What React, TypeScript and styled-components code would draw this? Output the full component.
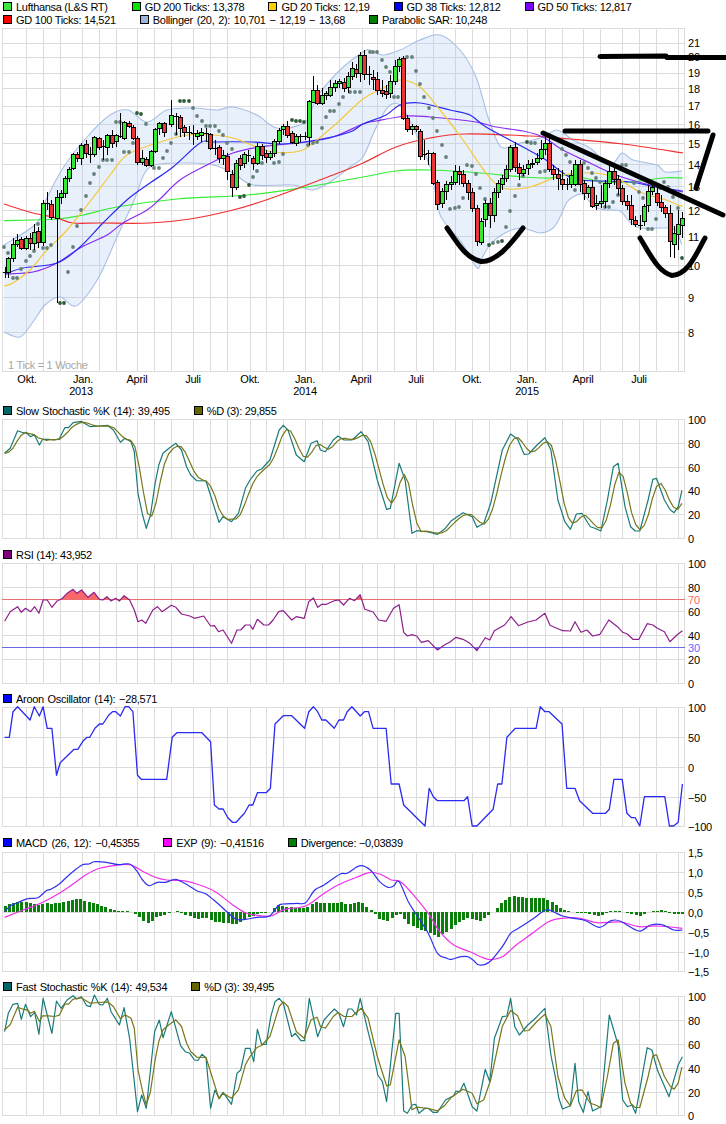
import * as React from 'react';
import styled, { createGlobalStyle } from 'styled-components';

const FONT = '"Liberation Sans", Arial, sans-serif';

const GlobalStyle = createGlobalStyle`
  html, body {
    margin: 0;
    padding: 0;
    background: #ffffff;
  }
`;

const Page = styled.div`
  width: 726px;
  height: 1124px;
  overflow: hidden;
  background: #ffffff;
  font-family: ${FONT};
`;

const Legend = styled.div<{ $height: number }>`
  display: flex;
  flex-direction: column;
  height: ${(p) => p.$height}px;
`;

const LegendRow = styled.div<{ $height: number }>`
  display: flex;
  align-items: center;
  gap: 24px;
  height: ${(p) => p.$height}px;
  padding-left: 3px;
`;

const LegendItem = styled.div<{ $spread: number }>`
  display: flex;
  align-items: center;
  gap: 4px;
  font-size: 11px;
  letter-spacing: -0.3px;
  word-spacing: ${(p) => p.$spread}px;
  color: #000000;
  white-space: nowrap;
`;

const Swatch = styled.span<{ $color: string }>`
  display: block;
  width: 7px;
  height: 7px;
  border: 1px solid #000000;
  background: ${(p) => p.$color};
`;

const Chart = styled.svg`
  display: block;
  overflow: visible;
`;

const GridLine = styled.line`
  stroke: #dcdcdc;
  stroke-width: 1;
  shape-rendering: crispEdges;
`;

const LevelLine = styled.line<{ $color: string }>`
  stroke: ${(p) => p.$color};
  stroke-width: 1;
  shape-rendering: crispEdges;
`;

const AxisLabel = styled.text<{ $color?: string }>`
  font-family: ${FONT};
  font-size: 11px;
  letter-spacing: -0.2px;
  fill: ${(p) => p.$color || '#000000'};
  dominant-baseline: central;
`;

const TimeLabel = styled.text`
  font-family: ${FONT};
  font-size: 11px;
  letter-spacing: -0.2px;
  fill: #000000;
  text-anchor: middle;
  dominant-baseline: central;
`;

const TickNote = styled.text`
  font-family: ${FONT};
  font-size: 11px;
  letter-spacing: -0.3px;
  fill: #a8a8a8;
  dominant-baseline: central;
`;

const Curve = styled.path<{ $color: string; $width?: number }>`
  fill: none;
  stroke: ${(p) => p.$color};
  stroke-width: ${(p) => p.$width || 1.2}px;
  stroke-linejoin: round;
`;

const Band = styled.path`
  fill: rgba(170, 200, 240, 0.28);
  stroke: none;
`;

const Wick = styled.line`
  stroke: #000000;
  stroke-width: 1;
  shape-rendering: crispEdges;
`;

const Body = styled.rect<{ $up: boolean }>`
  fill: ${(p) => (p.$up ? '#35e835' : '#ee3535')};
  stroke: #000000;
  stroke-width: 1;
  shape-rendering: crispEdges;
`;

const SarDot = styled.circle<{ $dark: boolean }>`
  fill: ${(p) => (p.$dark ? '#2f5a3a' : '#66807a')};
`;

const Sketch = styled.path`
  fill: none;
  stroke: #000000;
  stroke-width: 5px;
  stroke-linecap: round;
  stroke-linejoin: round;
`;

const Histogram = styled.rect`
  fill: #0a800a;
  shape-rendering: crispEdges;
`;

const OverFill = styled.path<{ $color: string }>`
  fill: ${(p) => p.$color};
  stroke: none;
`;

type Point = number[];

const parse = (s: string): Point[] =>
  s
    .trim()
    .split(/\s+/)
    .map((p) => p.split(',').map(Number));

// reads the traced values of the lower panels, which were taken at 2.16x / 3x
const traced = (s: string, base: number): Point[] =>
  parse(s).map(([x, y]) => [x / 2.16, base + y / 3]);

const straight = (pts: Point[]) => 'M' + pts.map((p) => `${p[0].toFixed(1)} ${p[1].toFixed(1)}`).join('L');

const smooth = (pts: Point[]) => {
  let d = `M${pts[0][0]} ${pts[0][1]}`;
  for (let i = 0; i < pts.length - 1; i++) {
    const a = pts[i - 1] || pts[i];
    const b = pts[i];
    const c = pts[i + 1];
    const e = pts[i + 2] || c;
    const c1x = b[0] + (c[0] - a[0]) / 6;
    const c1y = b[1] + (c[1] - a[1]) / 6;
    const c2x = c[0] - (e[0] - b[0]) / 6;
    const c2y = c[1] - (e[1] - b[1]) / 6;
    d += `C${c1x.toFixed(1)} ${c1y.toFixed(1)} ${c2x.toFixed(1)} ${c2y.toFixed(1)} ${c[0].toFixed(1)} ${c[1].toFixed(1)}`;
  }
  return d;
};

const valueAt = (pts: Point[], x: number) => {
  if (x <= pts[0][0]) return pts[0][1];
  for (let i = 1; i < pts.length; i++) {
    if (x <= pts[i][0]) {
      const t = (x - pts[i - 1][0]) / (pts[i][0] - pts[i - 1][0]);
      return pts[i - 1][1] + t * (pts[i][1] - pts[i - 1][1]);
    }
  }
  return pts[pts.length - 1][1];
};

const WEEKS = Array.from({ length: 162 }, (_, i) => 4.5 + i * 4.208);

const average3 = (pts: Point[]): Point[] =>
  WEEKS.map((x, i) => {
    const a = valueAt(pts, WEEKS[Math.max(i - 2, 0)]);
    const b = valueAt(pts, WEEKS[Math.max(i - 1, 0)]);
    const c = valueAt(pts, x);
    return [x, (a + b + c) / 3];
  });

const GRID_X = [
  2, 26, 43, 60, 82, 99, 116, 137, 154, 171, 193, 210, 227, 250, 266, 283, 305, 322, 339, 362, 377, 394, 416, 433,
  455, 472, 489, 510, 527, 545, 562, 583, 600, 622, 639, 656, 678, 684,
];

const TIME_LABELS: [string, number][] = [
  ['Okt.', 27],
  ['Jan.', 83],
  ['April', 137],
  ['Juli', 193],
  ['Okt.', 250],
  ['Jan.', 305],
  ['April', 361],
  ['Juli', 416],
  ['Okt.', 472],
  ['Jan.', 527],
  ['April', 583],
  ['Juli', 639],
];

const YEAR_LABELS: [string, number][] = [
  ['2013', 81],
  ['2014', 305],
  ['2015', 527],
];

const PRICE_GRID = [28, 43, 57, 73, 88, 106, 124, 143, 164, 186, 210, 236, 265, 297, 332, 371];

const PRICE_LABELS: [string, number][] = [
  ['21', 43],
  ['20', 57],
  ['19', 73],
  ['18', 89],
  ['17', 106],
  ['16', 125],
  ['15', 144],
  ['14', 165],
  ['13', 187],
  ['12', 211],
  ['11', 237],
  ['10', 266],
  ['9', 298],
  ['8', 333],
];

// x, body top, body bottom, wick top, wick bottom, 1 = rising week
const CANDLES: number[][] = [
  [4.5, 272, 272, 267, 278, 1], [8, 258, 272, 257, 278, 1], [13, 244, 258, 238, 262, 1], [17, 240, 244, 234, 247, 1],
  [21, 239, 248, 237, 250, 0], [26, 238, 248, 236, 250, 1], [30, 238, 243, 233, 250, 0], [34, 232, 243, 224, 250, 1],
  [38, 231, 242, 227, 248, 0], [43, 203, 242, 200, 246, 1], [47, 203, 203, 192, 210, 0], [51, 204, 217, 200, 220, 0],
  [56.5, 197, 218, 190, 303, 1], [60.5, 193, 197, 190, 204, 1], [64.5, 178, 193, 176, 198, 1], [68.5, 169, 178, 167, 182, 1],
  [73, 154, 168, 153, 170, 1], [77, 154, 158, 152, 162, 0], [81, 145, 158, 143, 165, 1], [86, 144, 153, 140, 158, 0],
  [90, 154, 154, 147, 163, 0], [94, 137, 154, 136, 157, 1], [99, 138, 147, 137, 150, 0], [103, 146, 146, 140, 160, 0],
  [107, 135, 147, 134, 155, 1], [112, 135, 143, 130, 148, 0], [116, 135, 141, 134, 147, 1], [120, 136, 136, 113, 138, 0],
  [124, 122, 138, 121, 140, 1], [129, 123, 126, 121, 128, 0], [133, 127, 138, 125, 140, 0], [137, 138, 162, 136, 165, 0],
  [142, 158, 162, 150, 165, 1], [146, 159, 165, 157, 167, 0], [151, 151, 165, 150, 167, 1], [154.5, 129, 151, 128, 153, 1],
  [159, 123, 128, 122, 135, 1], [164, 123, 132, 122, 137, 0], [171, 115, 124, 100, 127, 1], [176, 116, 116, 113, 135, 0],
  [180, 117, 128, 115, 137, 0], [184, 127, 132, 125, 137, 0], [189, 132, 132, 126, 140, 0], [193, 133, 133, 125, 145, 0],
  [197, 133, 136, 130, 140, 1], [201, 132, 135, 128, 142, 1], [206, 133, 133, 128, 142, 0], [210, 134, 148, 133, 150, 0],
  [215, 148, 148, 140, 155, 0], [219, 147, 158, 145, 163, 0], [223, 155, 158, 150, 165, 1], [227, 156, 171, 153, 180, 0],
  [232, 174, 187, 170, 197, 0], [236, 163, 187, 160, 190, 1], [240, 158, 165, 155, 170, 0], [244, 154, 163, 152, 168, 1],
  [248, 155, 155, 150, 162, 0], [253, 158, 163, 156, 170, 0], [257, 146, 163, 143, 165, 1], [262, 146, 155, 144, 160, 0],
  [266, 153, 157, 150, 163, 0], [270, 153, 157, 151, 160, 1], [274, 141, 153, 139, 157, 1], [279, 130, 141, 128, 144, 1],
  [283, 126, 129, 124, 135, 1], [287, 126, 135, 121, 138, 0], [292, 133, 142, 131, 144, 0], [296, 136, 143, 134, 146, 1],
  [300, 136, 136, 134, 142, 0], [304.5, 136, 136, 132, 140, 0], [309, 101, 137, 100, 145, 1], [313, 90, 102, 76, 103, 1],
  [317, 90, 103, 85, 105, 0], [322, 95, 103, 88, 105, 1], [326, 93, 95, 91, 100, 1], [330, 87, 95, 80, 97, 1],
  [335, 83, 87, 80, 92, 1], [339, 81, 83, 79, 88, 1], [344, 82, 88, 78, 92, 0], [348, 76, 87, 72, 93, 1],
  [352, 68, 76, 62, 80, 1], [356, 69, 73, 64, 78, 0], [360, 55, 73, 52, 82, 1], [364, 55, 74, 50, 80, 0],
  [369, 74, 74, 66, 85, 0], [373, 77, 79, 70, 90, 0], [377, 79, 90, 72, 95, 0], [382, 90, 93, 80, 97, 0],
  [386, 91, 94, 85, 99, 0], [390, 81, 93, 75, 98, 1], [395, 66, 81, 60, 85, 1], [399, 59, 66, 57, 72, 1],
  [403, 58, 118, 56, 120, 0], [407, 118, 129, 115, 132, 0], [412, 126, 129, 124, 135, 1], [416, 126, 129, 125, 132, 0],
  [420, 131, 156, 129, 160, 0], [424, 154, 154, 140, 160, 0], [428, 153, 153, 150, 165, 0], [433, 153, 183, 152, 185, 0],
  [437, 182, 204, 180, 210, 0], [442, 191, 203, 188, 208, 1], [446, 184, 191, 181, 200, 1], [451, 182, 184, 176, 190, 1],
  [455, 171, 182, 165, 185, 1], [459, 171, 174, 166, 185, 0], [463, 174, 183, 170, 187, 0], [468, 183, 192, 180, 200, 0],
  [472, 192, 208, 188, 212, 0], [477, 208, 241, 205, 246, 0], [481, 221, 242, 218, 245, 1], [485, 203, 219, 200, 227, 1],
  [490, 203, 215, 198, 228, 0], [494, 192, 215, 188, 222, 1], [498, 183, 192, 180, 198, 1], [502, 178, 184, 175, 190, 1],
  [506, 169, 178, 165, 182, 1], [510, 147, 169, 145, 172, 1], [515, 147, 167, 142, 172, 0], [519, 167, 173, 163, 180, 0],
  [523, 169, 173, 165, 176, 1], [528, 164, 168, 160, 175, 1], [532, 163, 164, 159, 168, 1], [537, 158, 162, 153, 165, 1],
  [541, 149, 158, 140, 160, 1], [545, 143, 149, 137, 155, 1], [549, 143, 169, 135, 172, 0], [553, 169, 174, 165, 180, 0],
  [558, 174, 178, 168, 190, 0], [562, 179, 184, 170, 190, 0], [567, 184, 184, 178, 190, 0], [571, 175, 184, 170, 188, 1],
  [575, 164, 184, 160, 186, 1], [580, 164, 184, 160, 192, 0], [584, 183, 193, 180, 200, 0], [588, 187, 193, 185, 198, 1],
  [592, 187, 206, 180, 208, 0], [596, 203, 205, 195, 210, 1], [601, 201, 203, 185, 208, 1], [605, 183, 201, 180, 208, 1],
  [609, 171, 183, 165, 188, 1], [614, 171, 179, 165, 185, 0], [618, 179, 188, 175, 195, 0], [622, 188, 201, 185, 205, 0],
  [627, 201, 205, 195, 210, 0], [631, 205, 219, 195, 225, 0], [635, 220, 224, 216, 227, 0], [640, 225, 225, 215, 230, 0],
  [644, 206, 221, 204, 226, 1], [648, 191, 205, 185, 212, 1], [652, 187, 191, 182, 195, 1], [657, 193, 202, 188, 206, 0],
  [661, 202, 207, 195, 212, 0], [665, 207, 213, 205, 218, 0], [670, 213, 241, 205, 257, 0], [674, 233, 244, 226, 258, 1],
  [678, 224, 234, 210, 250, 1], [682, 218, 225, 212, 238, 1],
];

const SAR = parse(`4,247 8,253 13,278 17,278 21,269 26,261 30,256 34,251 38,224 43,248 47,248 51,245 68,272 73,247 77,226 81,210
  86,196 90,183 94,174 99,167 103,160 107,160 112,160 116,122 120,122 124,152 129,152 133,143 146,124 154,168 159,168 163,158 167,151
  171,143 176,134 193,108 197,116 202,121 206,126 210,126 215,126 219,131 223,135 227,143 232,149 253,177 257,171 262,163 274,163
  279,162 283,154 308,145 313,143 317,142 322,128 326,117 330,111 334,111 339,104 343,97 350,92 355,92 360,92 370,52 373,52 377,52
  382,60 386,67 390,72 394,97 398,97 407,57 412,57 416,71 420,84 424,97 429,108 433,118 437,131 442,145 446,157 450,209 455,208 459,207
  463,198 467,165 472,166 476,174 480,188 485,199 493,243 498,242 506,227 510,211 515,196 519,185 523,176 531,143 535,143 540,172 545,171
  558,177 562,149 566,155 570,162 575,190 584,163 588,168 592,173 596,178 600,182 605,207 609,207 613,202 618,195 622,165 626,165 634,183
  639,192 643,198 648,229 652,229 656,219 660,188 664,182 668,187 673,197 678,208`);

const SAR_DARK = parse(`60,303 64,303 137,113 141,114 180,101 184,101 189,101 240,197 244,196 249,185 292,120 296,121 300,121 304,122
  489,245 502,241 527,142 682,258`);

const UPPER = parse(`4,245 37,223 46,200 63,168 87,137 110,115 128,110 147,122 167,110 193,108 217,110 233,107 257,115 277,128 305,122
  317,97 340,70 363,52 370,50 383,55 400,50 420,40 440,35 460,50 476,77 488,117 498,143 505,148 513,145 543,137 557,130 573,140 590,148
  610,165 622,153 633,160 657,165 665,172 682,171`);

const LOWER = parse(`4,332 20,337 33,322 45,305 60,297 73,306 83,300 100,275 117,237 133,203 137,193 150,167 187,163 213,165 233,173
  253,185 293,185 313,190 333,180 350,167 363,157 375,130 388,107 400,105 412,125 423,150 432,173 438,208 445,223 462,243 477,268 482,258
  490,245 505,233 522,228 540,233 553,228 560,217 567,202 573,197 582,194 590,202 597,208 607,210 620,211 630,222 640,228 663,228 675,230 682,245`);

const MA_200 = parse(`4,220.7 57,219 83,215 117,207 177,199 247,195 300,188 363,177 396,171 430,170 480,173 523,177 550,178 570,175 603,182 630,182 663,178 683,178`);
const MA_100 = parse(`4,204 33,213 57,218 73,223 100,223 150,223 190,219 233,210 269,199 333,175 363,163 396,147 430,138 466,134 530,136 570,139 623,144 683,153`);
const MA_50 = parse(`5,274 33,272 57,263 80,248 107,235 123,223 147,210 160,199 180,180 207,165 233,153 260,147 287,144 307,142 333,137 363,124 376,121 406,116 430,117 476,122 496,127 523,131 543,137 563,150 590,163 616,175 650,185 683,192`);
const MA_38 = parse(`5,274 23,268 57,263 80,247 103,223 128,199 150,183 173,167 200,143 213,142 253,142 283,144 317,140 350,132 363,124 386,115 400,105 420,103 450,110 470,115 486,127 523,147 546,160 563,173 580,180 630,182 656,187 683,191`);
const MA_20 = parse(`4,286 13,283 30,270 47,250 67,230 92,199 110,175 127,155 157,143 187,135 213,135 233,138 257,147 273,152 300,151 317,140 337,123 363,99 383,88 400,80 420,87 440,110 463,140 486,173 503,188 530,187 563,175 593,173 616,178 640,192 666,200 678,205 683,206`);

const SLOW_K = traced(
  `10,160 22,145 38,92 50,98 58,100 66,110 74,104 85,135 92,118 105,118 118,120 128,116 140,83 148,83 158,68 175,64 195,80 215,78 232,76 245,90
  260,127 270,115 283,125 290,155 298,280 308,345 316,385 325,345 335,250 343,195 352,160 365,145 380,130 392,150 403,200 412,225 425,242 445,243
  458,300 473,367 482,350 500,365 515,340 530,265 540,240 555,213 565,207 583,180 603,90 612,76 622,90 640,165 657,185 672,130 685,122 692,150
  703,155 720,120 730,108 743,120 760,120 780,95 795,125 815,240 835,328 843,325 862,190 875,240 890,400 900,392 925,396 945,403 960,388 975,362
  1000,338 1020,350 1030,382 1045,370 1060,310 1085,150 1103,102 1118,118 1132,163 1142,162 1160,135 1177,113 1190,150 1205,300 1220,365 1232,388
  1245,342 1257,340 1275,380 1285,385 1298,393 1312,300 1325,200 1335,190 1350,320 1362,380 1372,393 1382,393 1400,300 1410,238 1418,235 1435,300
  1448,330 1456,338 1465,320 1473,272`,
  400
);
const SLOW_D = average3(SLOW_K);

const FAST_OFFSET = 576.5;
const FAST_D = SLOW_K.map(([x, y]) => [x, y + FAST_OFFSET]);

const FAST_K = traced(
  `10,170 18,115 28,88 38,85 46,133 55,88 66,125 75,112 84,178 93,70 102,120 112,175 122,78 132,100 145,75 158,62 166,72 176,65 187,92 195,95 204,60
  214,88 222,90 232,70 240,110 258,150 268,98 280,190 297,410 306,360 316,400 334,170 344,135 352,188 370,110 390,212 400,230 410,235 420,255 428,256
  436,238 445,248 455,400 464,345 473,370 482,352 500,388 512,295 520,285 530,220 540,220 548,260 556,163 565,208 575,208 585,125 594,80 603,70 612,85
  630,185 638,175 650,197 658,197 668,70 686,185 700,135 715,112 722,102 732,115 742,155 752,102 760,102 770,120 778,70 795,170 806,230 816,300 826,320
  835,380 855,115 862,115 872,408 880,415 890,390 898,388 905,415 918,400 925,400 935,412 945,412 962,375 980,362 985,348 993,350 1002,325 1020,395
  1030,408 1048,283 1058,320 1068,190 1085,125 1095,123 1103,70 1112,155 1122,180 1140,150 1160,125 1177,100 1190,240 1200,310 1207,370 1215,402 1232,392
  1242,265 1250,380 1260,412 1270,350 1280,408 1298,395 1316,120 1335,210 1345,375 1355,395 1365,390 1373,415 1398,218 1408,225 1420,285 1445,365 1465,270
  1474,245`,
  975
);

const RSI = traced(
  `10,664 22,635 38,620 46,637 55,625 66,635 75,620 84,640 93,600 102,600 112,622 124,602 132,598 145,580 158,568 166,580 176,570 190,592 203,577 215,598
  222,600 231,590 240,603 250,595 258,603 268,587 280,600 290,630 298,665 306,660 315,670 330,630 340,620 350,635 370,616 380,622 392,642 410,648 420,655
  440,648 455,678 463,677 472,695 482,690 500,730 512,690 520,690 530,675 540,675 546,688 556,658 570,675 580,675 590,660 602,635 612,632 630,660 640,650
  657,655 667,605 677,594 686,622 695,613 705,613 722,602 732,600 742,615 755,595 766,602 778,584 788,628 806,636 818,660 834,664 850,625 862,614 872,697
  880,708 890,704 900,708 910,727 925,722 945,750 960,735 972,726 985,712 1000,718 1015,730 1030,752 1048,713 1058,720 1068,692 1090,675 1104,650 1120,677
  1140,666 1158,660 1177,640 1188,676 1215,692 1232,693 1242,665 1255,697 1268,690 1280,708 1296,703 1315,660 1335,682 1345,697 1355,702 1367,718 1380,718
  1398,671 1410,675 1420,685 1435,695 1447,725 1462,705 1474,692`,
  400
);

const AROON = traced(
  `10,142 20,142 28,65 38,50 65,90 74,50 85,78 93,50 102,115 112,115 122,256 130,218 160,178 168,178 180,152 188,142 194,142 205,115 215,102 222,102 235,75
  243,65 250,65 260,78 270,50 278,50 287,65 297,256 305,268 360,268 372,142 382,128 436,128 455,155 463,345 473,357 482,357 492,383 502,397 510,397 528,370
  538,345 546,345 556,308 575,308 584,295 594,102 612,77 630,77 658,115 667,65 677,50 686,65 695,90 704,90 722,115 732,90 742,90 750,65 760,50 778,78 787,65
  796,65 806,115 834,115 845,282 862,282 872,345 918,408 927,295 936,320 945,332 1002,332 1010,320 1020,408 1030,408 1065,358 1075,282 1084,282 1095,142
  1113,115 1158,115 1167,50 1177,65 1186,65 1214,102 1224,295 1242,295 1252,332 1280,370 1308,370 1316,358 1326,268 1344,268 1354,370 1364,383 1372,383
  1382,408 1392,320 1436,320 1446,408 1455,408 1465,397 1474,282`,
  690
);

const MACD = traced(
  `10,245 22,228 38,218 60,206 82,203 100,182 110,178 128,162 145,140 160,122 178,104 192,102 205,95 230,97 255,104 280,102 295,122 308,150 322,167 340,157
  358,157 380,148 405,165 425,182 445,192 470,220 490,245 510,268 530,268 555,262 582,258 600,228 612,222 640,220 660,218 680,180 700,165 735,132 750,130
  778,107 800,120 820,155 838,172 850,168 862,155 882,215 900,255 925,310 945,370 965,385 975,388 995,380 1010,380 1022,390 1035,405 1058,395 1085,350
  1103,310 1120,295 1150,268 1178,240 1195,245 1215,258 1240,265 1265,272 1295,292 1320,272 1340,274 1380,303 1405,285 1430,284 1455,300 1474,300`,
  830
);

const SIGNAL = traced(
  `10,262 50,240 90,218 130,188 160,160 185,135 215,115 250,106 280,104 310,125 335,142 360,150 395,152 425,162 465,185 500,222 530,248 555,256 585,258 615,238
  660,228 695,195 730,165 770,142 800,127 825,135 845,150 865,155 890,190 925,250 950,305 980,345 1015,365 1055,388 1085,380 1115,345 1150,310 1185,275 1215,265
  1250,264 1290,278 1340,276 1380,290 1420,288 1474,295`,
  830
);

const GridLines = ({ lines, top, bottom }: { lines: number[]; top: number; bottom: number }) => (
  <>
    {GRID_X.map((x) => (
      <GridLine key={`v${x}`} x1={x + 0.5} x2={x + 0.5} y1={top} y2={bottom + 1} />
    ))}
    {lines.map((y) => (
      <GridLine key={`h${y}`} x1={2} x2={685} y1={y + 0.5} y2={y + 0.5} />
    ))}
  </>
);

const AxisLabels = ({ labels }: { labels: [string, number][] }) => (
  <>
    {labels.map(([text, y]) => (
      <AxisLabel key={text} x={688} y={y}>
        {text}
      </AxisLabel>
    ))}
  </>
);

const Panel = ({ top, height, children }: { top: number; height: number; children: React.ReactNode }) => (
  <Chart width={726} height={height} viewBox={`0 ${top} 726 ${height}`}>
    {children}
  </Chart>
);

const bandPath = () => {
  const back = smooth([...LOWER].reverse());
  return `${smooth(UPPER)}L${back.slice(1)}Z`;
};

const PriceChart = () => (
  <Panel top={28} height={374}>
    <GridLines lines={PRICE_GRID} top={28} bottom={371} />
    <Band d={bandPath()} />
    <Curve d={smooth(UPPER)} $color="#a9bfe6" $width={1.1} />
    <Curve d={smooth(LOWER)} $color="#a9bfe6" $width={1.1} />
    <Curve d={smooth(MA_200)} $color="#33ee33" />
    <Curve d={smooth(MA_100)} $color="#f03030" />
    <Curve d={smooth(MA_50)} $color="#8a2cf0" />
    <Curve d={smooth(MA_38)} $color="#2a2af0" />
    <Curve d={smooth(MA_20)} $color="#f5c93a" />
    {SAR.map(([x, y]) => (
      <SarDot key={`s${x}`} cx={x} cy={y} r={1.9} $dark={false} />
    ))}
    {SAR_DARK.map(([x, y]) => (
      <SarDot key={`d${x}`} cx={x} cy={y} r={1.9} $dark />
    ))}
    {CANDLES.map(([x, top, bottom, high, low, up]) => {
      const px = Math.round(x);
      return (
        <g key={x}>
          <Wick x1={px + 0.5} x2={px + 0.5} y1={high} y2={low} />
          {top === bottom ? (
            <Wick x1={px - 2} x2={px + 3} y1={top + 0.5} y2={top + 0.5} />
          ) : (
            <Body x={px - 1.5} y={top + 0.5} width={4} height={bottom - top} $up={up === 1} />
          )}
        </g>
      );
    })}
    <TickNote x={8} y={365}>
      1 Tick = 1 Woche
    </TickNote>
    <AxisLabels labels={PRICE_LABELS} />
    {TIME_LABELS.map(([text, x]) => (
      <TimeLabel key={`${text}${x}`} x={x} y={379}>
        {text}
      </TimeLabel>
    ))}
    {YEAR_LABELS.map(([text, x]) => (
      <TimeLabel key={text} x={x} y={391}>
        {text}
      </TimeLabel>
    ))}
    <Sketch d="M600 56.5L666 56M667 57.5L726 57.5" />
    <Sketch d="M565 131L708 131" />
    <Sketch d="M713 135L696 188" />
    <Sketch d="M543 133L723 215" />
    <Sketch d="M447 228C458 244 466 258 481 261.5C496 262 510 245 523 228" />
    <Sketch d="M640 238C650 254 658 272 672 275.5C688 275 696 254 705 238" />
  </Panel>
);

const PERCENT_LABELS: [string, number][] = [
  ['100', 420],
  ['80', 444],
  ['60', 468],
  ['40', 491],
  ['20', 515],
  ['0', 539],
];

const SlowStochastic = () => (
  <Panel top={419} height={127}>
    <GridLines lines={[419, 443, 467, 490, 514, 538]} top={419} bottom={538} />
    <Curve d={straight(SLOW_K)} $color="#1a7a7a" />
    <Curve d={straight(SLOW_D)} $color="#77771a" />
    <AxisLabels labels={PERCENT_LABELS} />
  </Panel>
);

const RsiChart = () => {
  const closed = `${straight(RSI)}L${RSI[RSI.length - 1][0]} 599L${RSI[0][0]} 599Z`;
  return (
    <Panel top={563} height={127}>
      <defs>
        <clipPath id="above70">
          <rect x={0} y={563} width={726} height={36} />
        </clipPath>
        <clipPath id="below30">
          <rect x={0} y={647} width={726} height={36} />
        </clipPath>
      </defs>
      <GridLines lines={[563, 587, 611, 635, 659, 683]} top={563} bottom={683} />
      <OverFill d={closed} $color="#f86868" clipPath="url(#above70)" />
      <OverFill d={`${straight(RSI)}L${RSI[RSI.length - 1][0]} 647L${RSI[0][0]} 647Z`} $color="#6868f8" clipPath="url(#below30)" />
      <LevelLine x1={2} x2={685} y1={599.5} y2={599.5} $color="#e87070" />
      <LevelLine x1={2} x2={685} y1={647.5} y2={647.5} $color="#6a6ae8" />
      <Curve d={straight(RSI)} $color="#8c1f8c" />
      <AxisLabel x={688} y={564}>100</AxisLabel>
      <AxisLabel x={688} y={588}>80</AxisLabel>
      <AxisLabel x={688} y={600} $color="#ff6666">70</AxisLabel>
      <AxisLabel x={688} y={612}>60</AxisLabel>
      <AxisLabel x={688} y={636}>40</AxisLabel>
      <AxisLabel x={688} y={648} $color="#6666ff">30</AxisLabel>
      <AxisLabel x={688} y={660}>20</AxisLabel>
      <AxisLabel x={688} y={684}>0</AxisLabel>
    </Panel>
  );
};

const AroonChart = () => (
  <Panel top={707} height={127}>
    <GridLines lines={[707, 737, 767, 797, 826]} top={707} bottom={826} />
    <Curve d={straight(AROON)} $color="#2a2af0" $width={1.3} />
    <AxisLabels
      labels={[
        ['100', 708],
        ['50', 738],
        ['0', 768],
        ['−50', 798],
        ['−100', 827],
      ]}
    />
  </Panel>
);

const MacdChart = () => (
  <Panel top={851} height={127}>
    <GridLines lines={[852, 872, 892, 912, 932, 952, 971]} top={852} bottom={971} />
    {WEEKS.map((x) => {
      const diff = valueAt(SIGNAL, x) - valueAt(MACD, x);
      return <Histogram key={x} x={Math.round(x) - 1} y={diff > 0 ? 912 - diff : 912} width={3} height={Math.abs(diff)} />;
    })}
    <Curve d={smooth(SIGNAL)} $color="#f030e8" />
    <Curve d={smooth(MACD)} $color="#3030f0" />
    <AxisLabels
      labels={[
        ['1,5', 853],
        ['1,0', 873],
        ['0,5', 893],
        ['0,0', 913],
        ['−0,5', 933],
        ['−1,0', 953],
        ['−1,5', 972],
      ]}
    />
  </Panel>
);

const FastStochastic = () => (
  <Panel top={995} height={129}>
    <GridLines lines={[996, 1020, 1044, 1068, 1092, 1115]} top={996} bottom={1115} />
    <Curve d={straight(FAST_K)} $color="#1a7a7a" />
    <Curve d={straight(FAST_D)} $color="#77771a" />
    <AxisLabels
      labels={[
        ['100', 997],
        ['80', 1021],
        ['60', 1045],
        ['40', 1069],
        ['20', 1093],
        ['0', 1116],
      ]}
    />
  </Panel>
);

const Entry = ({ color, spread = 0, children }: { color: string; spread?: number; children: React.ReactNode }) => (
  <LegendItem $spread={spread}>
    <Swatch $color={color} />
    {children}
  </LegendItem>
);

const App = () => (
  <Page>
    <GlobalStyle />
    <Legend $height={28}>
      <LegendRow $height={13}>
        <Entry color="#3ce83c">Lufthansa (L&amp;S RT)</Entry>
        <Entry color="#00e600">GD 200 Ticks: 13,378</Entry>
        <Entry color="#ffcc00">GD 20 Ticks: 12,19</Entry>
        <Entry color="#0000ff">GD 38 Ticks: 12,812</Entry>
        <Entry color="#8000ff">GD 50 Ticks: 12,817</Entry>
      </LegendRow>
      <LegendRow $height={13}>
        <Entry color="#ff0000">GD 100 Ticks: 14,521</Entry>
        <Entry color="#9fb5dc" spread={1}>Bollinger (20, 2): 10,701 − 12,19 − 13,68</Entry>
        <Entry color="#008000">Parabolic SAR: 10,248</Entry>
      </LegendRow>
    </Legend>
    <PriceChart />
    <Legend $height={17}>
      <LegendRow $height={17}>
        <Entry color="#006666" spread={0.7}>Slow Stochastic %K (14): 39,495</Entry>
        <Entry color="#666600">%D (3): 29,855</Entry>
      </LegendRow>
    </Legend>
    <SlowStochastic />
    <Legend $height={17}>
      <LegendRow $height={17}>
        <Entry color="#800080">RSI (14): 43,952</Entry>
      </LegendRow>
    </Legend>
    <RsiChart />
    <Legend $height={17}>
      <LegendRow $height={17}>
        <Entry color="#0000ff" spread={1}>Aroon Oscillator (14): −28,571</Entry>
      </LegendRow>
    </Legend>
    <AroonChart />
    <Legend $height={17}>
      <LegendRow $height={17}>
        <Entry color="#0000ff" spread={1.5}>MACD (26, 12): −0,45355</Entry>
        <Entry color="#ff00ff" spread={1}>EXP (9): −0,41516</Entry>
        <Entry color="#008000">Divergence: −0,03839</Entry>
      </LegendRow>
    </Legend>
    <MacdChart />
    <Legend $height={17}>
      <LegendRow $height={17}>
        <Entry color="#006666" spread={0.7}>Fast Stochastic %K (14): 49,534</Entry>
        <Entry color="#666600">%D (3): 39,495</Entry>
      </LegendRow>
    </Legend>
    <FastStochastic />
  </Page>
);

export default App;
